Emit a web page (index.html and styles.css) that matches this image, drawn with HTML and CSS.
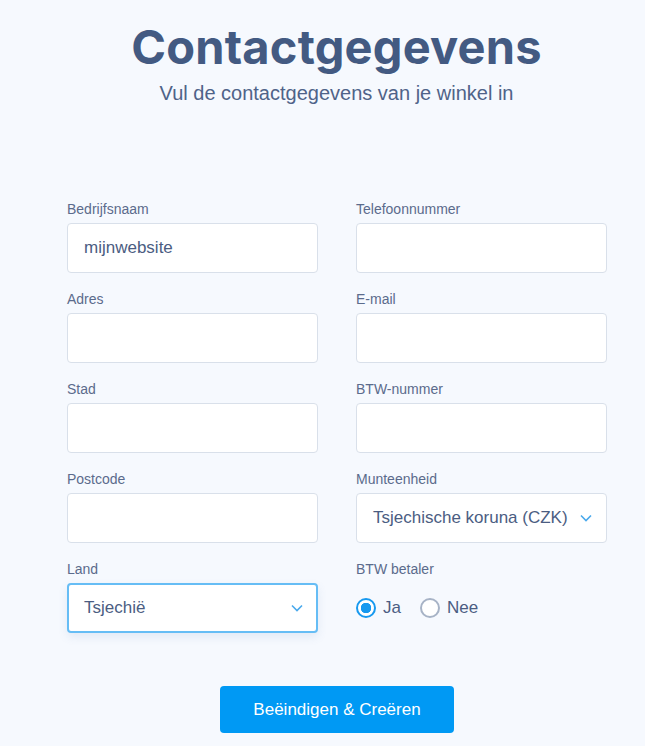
FILE: index.html
```html
<!DOCTYPE html>
<html lang="nl">

<head>
  <meta charset="UTF-8">
  <title>Contactgegevens</title>
  <link rel="stylesheet" href="styles.css">
</head>

<body>
  <header class="intro">
    <h1>Contactgegevens</h1>
    <p>Vul de contactgegevens van je winkel in</p>
  </header>

  <form class="contact">
    <div class="field">
      <label>Bedrijfsnaam</label>
      <div class="box">mijnwebsite</div>
    </div>
    <div class="field">
      <label>Telefoonnummer</label>
      <div class="box"></div>
    </div>
    <div class="field">
      <label>Adres</label>
      <div class="box"></div>
    </div>
    <div class="field">
      <label>E-mail</label>
      <div class="box"></div>
    </div>
    <div class="field">
      <label>Stad</label>
      <div class="box"></div>
    </div>
    <div class="field">
      <label>BTW-nummer</label>
      <div class="box"></div>
    </div>
    <div class="field">
      <label>Postcode</label>
      <div class="box"></div>
    </div>
    <div class="field">
      <label>Munteenheid</label>
      <div class="box select">
        <span>Tsjechische koruna (CZK)</span>
        <svg class="chevron" width="12" height="8" viewBox="0 0 12 8"><path d="M1 1.5 6 6.5 11 1.5" fill="none" stroke="#4aa9ec" stroke-width="1.6"/></svg>
      </div>
    </div>
    <div class="field">
      <label>Land</label>
      <div class="box select focus">
        <span>Tsjechië</span>
        <svg class="chevron" width="12" height="8" viewBox="0 0 12 8"><path d="M1 1.5 6 6.5 11 1.5" fill="none" stroke="#4aa9ec" stroke-width="1.6"/></svg>
      </div>
    </div>
    <div class="field">
      <label>BTW betaler</label>
      <div class="radios">
        <span class="radio on"><i></i>Ja</span>
        <span class="radio"><i></i>Nee</span>
      </div>
    </div>
  </form>

  <div class="actions">
    <button type="button" class="submit">Beëindigen &amp; Creëren</button>
  </div>
</body>

</html>
```

FILE: styles.css
```css
html,
body {
  margin: 0;
  padding: 0;
  background: #f6f9fe;
  font-family: "Liberation Sans", Arial, sans-serif;
  color: #4b5d82;
}

.intro {
  text-align: center;
  padding: 17px 0 0 28px;
}

.intro h1 {
  margin: 0;
  font-family: Inter, "Liberation Sans", sans-serif;
  font-weight: 700;
  font-size: 47px;
  line-height: 60px;
  color: #435a82;
  letter-spacing: 0.2px;
}

.intro p {
  margin: 4px 0 0;
  font-size: 20px;
  line-height: 24px;
  color: #4f6389;
}

.contact {
  display: grid;
  grid-template-columns: 251px 251px;
  column-gap: 38px;
  row-gap: 18px;
  padding: 96px 0 0 67px;
}

.field label {
  display: block;
  font-size: 14px;
  line-height: 16px;
  color: #5b6b8c;
  margin-bottom: 6px;
}

.box {
  box-sizing: border-box;
  height: 50px;
  background: #fff;
  border: 1px solid #d9e0ea;
  border-radius: 4px;
  padding: 0 16px;
  display: flex;
  align-items: center;
  font-size: 17px;
  color: #4b5d82;
}

.select {
  justify-content: space-between;
  padding-right: 14px;
}

.focus {
  border: 2px solid #66bdf5;
  padding-left: 15px;
  padding-right: 13px;
  box-shadow: 0 4px 10px rgba(80, 120, 180, 0.12);
}

.radios {
  height: 50px;
  display: flex;
  align-items: center;
  gap: 19px;
  font-size: 17px;
}

.radio {
  display: flex;
  align-items: center;
  gap: 7px;
}

.radio i {
  box-sizing: border-box;
  width: 20px;
  height: 20px;
  border-radius: 50%;
  border: 2px solid #a7b3c6;
  background: #fff;
}

.radio.on i {
  border-color: #1799ef;
  background: radial-gradient(circle, #1799ef 0 5px, #fff 5.5px);
}

.actions {
  display: flex;
  justify-content: center;
  padding: 53px 0 0 29px;
}

.submit {
  width: 234px;
  height: 47px;
  border: none;
  border-radius: 4px;
  background: #0099f4;
  color: #fff;
  font-family: "Liberation Sans", Arial, sans-serif;
  font-size: 17px;
}
```
